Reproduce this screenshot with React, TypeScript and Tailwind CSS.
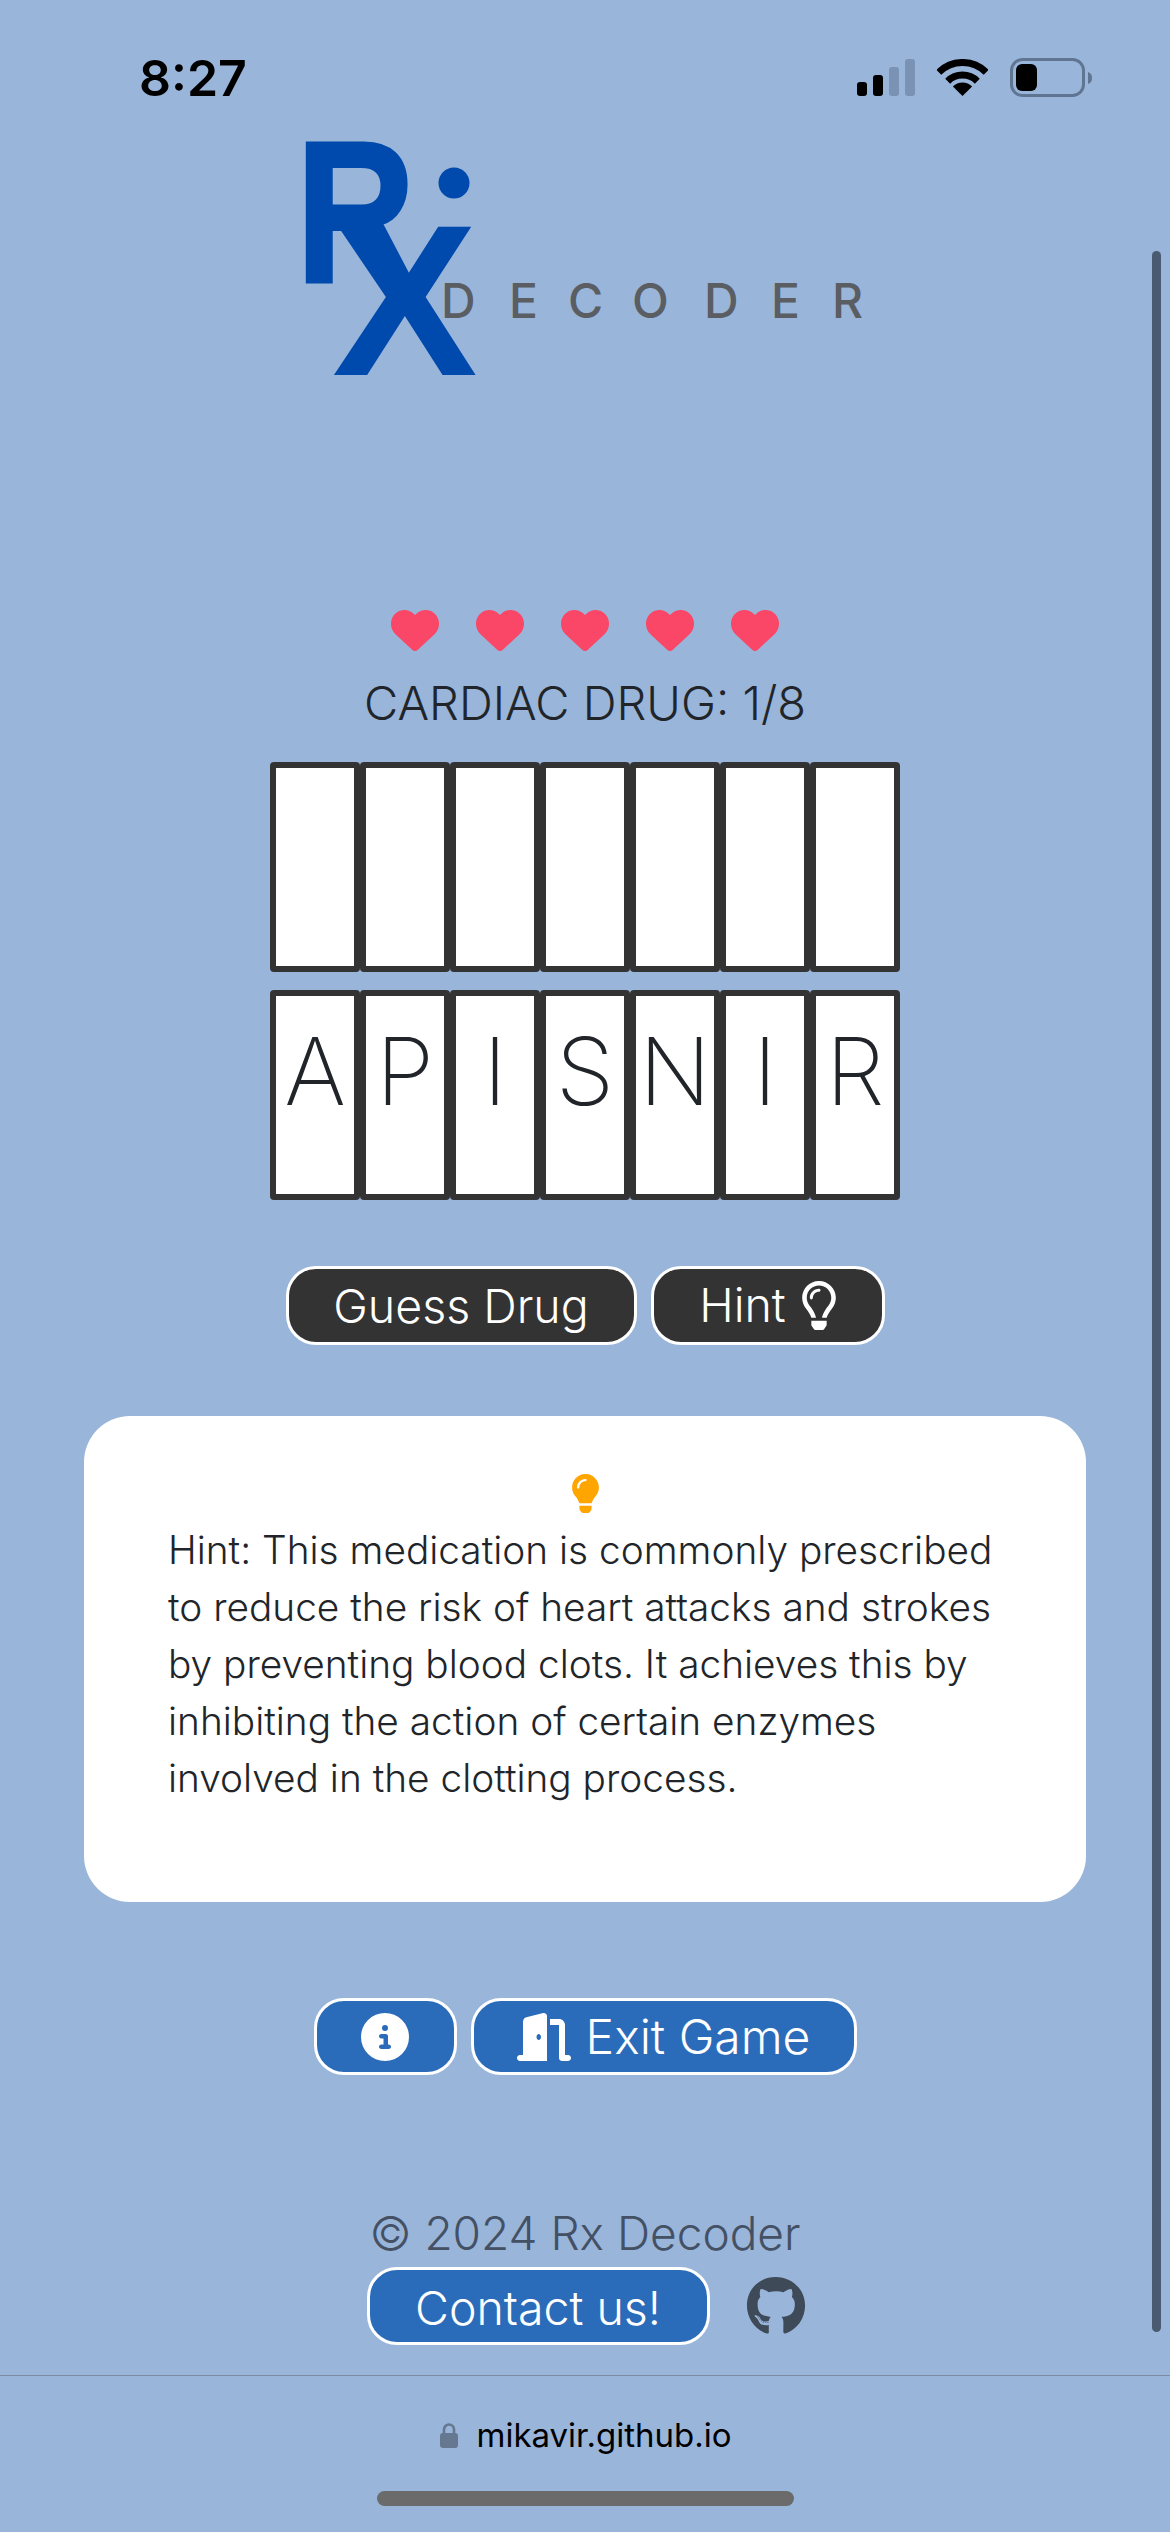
import { FaLightbulb, FaRegLightbulb } from 'react-icons/fa';
import { FaCircleInfo, FaDoorOpen, FaGithub, FaHeart } from 'react-icons/fa6';

const lives = [1, 2, 3, 4, 5];
const letters = ['A', 'P', 'I', 'S', 'N', 'I', 'R'];

function StatusIcons() {
  return (
    <div className="flex items-start">
      <svg width="58" height="37" viewBox="0 0 58 37" className="mt-px">
        <rect x="0" y="23" width="10" height="14" rx="3" fill="#000" />
        <rect x="16" y="16" width="10" height="21" rx="3" fill="#000" />
        <rect x="32" y="8" width="10" height="29" rx="3" fill="#7a93b5" />
        <rect x="48" y="0" width="10" height="37" rx="3" fill="#7a93b5" />
      </svg>
      <svg width="51" height="37" viewBox="0 0 51 37" className="mt-px ml-[22px]">
        <path d="M1.8 13.3A33.5 33.5 0 0 1 49.2 13.3" fill="none" stroke="#000" strokeWidth="7" />
        <path d="M10.7 22.2A21 21 0 0 1 40.3 22.2" fill="none" stroke="#000" strokeWidth="7" />
        <path d="M25.5 37L15.9 27.4A13.5 13.5 0 0 1 35.1 27.4Z" fill="#000" />
      </svg>
      <svg width="82" height="39" viewBox="0 0 82 39" className="ml-[22px]">
        <rect x="1.5" y="1.5" width="72" height="36" rx="11" fill="none" stroke="#5f7592" strokeWidth="3" />
        <rect x="6" y="6" width="21" height="27" rx="6" fill="#000" />
        <path d="M78 14C81 15 82 17 82 20S81 25 78 26Z" fill="#5f7592" />
      </svg>
    </div>
  );
}

function Logo() {
  return (
    <svg width="565" height="234" viewBox="0 0 565 234" className="ml-[305px] shrink-0 overflow-visible">
      <text
        transform="translate(-8.5 140) scale(0.82 1)"
        fontFamily="'Liberation Sans', sans-serif"
        fontWeight="700"
        fontSize="200"
        fill="#004aad"
        stroke="#004aad"
        strokeWidth="4"
      >
        R
      </text>
      <circle cx="149" cy="42" r="15.5" fill="#004aad" />
      <text
        transform="translate(27 234) scale(1.01 1)"
        fontFamily="'Liberation Sans', sans-serif"
        fontWeight="700"
        fontSize="216"
        fill="#004aad"
      >
        X
      </text>
      <text
        x="136 204 263 327 399 466 527"
        y="177"
        fontFamily="Inter, sans-serif"
        fontWeight="500"
        fontSize="48"
        fill="#5a5d62"
      >
        DECODER
      </text>
    </svg>
  );
}

function TileRow({ chars }: { chars: string[] }) {
  return (
    <div className="flex justify-center">
      {chars.map((c, i) => (
        <div
          key={i}
          className="w-[90px] h-[210px] box-border border-[6px] border-[#333333] rounded-[4px] bg-white pt-[28px] text-center text-[94px] leading-none font-[250] text-[#212529]"
        >
          {c}
        </div>
      ))}
    </div>
  );
}

export default function App() {
  return (
    <div className="relative w-[1170px] h-[2532px] overflow-hidden bg-[#99b5da] font-[Inter,sans-serif] flex flex-col">
      <div className="flex justify-between h-[141px] pt-[58px] pl-[139px] pr-[78px] shrink-0">
        <span className="text-[50px] leading-[40px] font-semibold text-black">8:27</span>
        <StatusIcons />
      </div>

      <Logo />

      <div className="flex justify-center gap-[37px] mt-[231px] h-[48px]">
        {lives.map((n) => (
          <FaHeart key={n} size={48} color="#fa4767" />
        ))}
      </div>

      <p className="mt-[19px] text-center text-[47px] leading-[60px] font-light text-[#212529]">
        CARDIAC DRUG: 1/8
      </p>

      <div className="mt-[29px] flex flex-col gap-[18px]">
        <TileRow chars={['', '', '', '', '', '', '']} />
        <TileRow chars={letters} />
      </div>

      <div className="mt-[66px] flex justify-center gap-[14px]">
        <button className="w-[351px] h-[79px] rounded-[30px] border-[3px] border-white bg-[#333333] text-white text-[46.5px] font-light pt-[2px]">
          Guess Drug
        </button>
        <button className="w-[234px] h-[79px] rounded-[30px] border-[3px] border-white bg-[#333333] text-white text-[46.5px] font-light flex items-center justify-center gap-[16px]">
          Hint
          <FaRegLightbulb className="w-[34px] h-[49px]" />
        </button>
      </div>

      <div className="mt-[71px] mx-[84px] h-[486px] rounded-[46px] bg-white flex flex-col items-center pt-[58px] shrink-0">
        <FaLightbulb size={39} color="#ffa500" />
        <p className="mt-[8px] w-[834px] whitespace-nowrap text-[38.8px] leading-[57px] font-light text-[#212529]">
          Hint: This medication is commonly prescribed
          <br />
          to reduce the risk of heart attacks and strokes
          <br />
          by preventing blood clots. It achieves this by
          <br />
          inhibiting the action of certain enzymes
          <br />
          involved in the clotting process.
        </p>
      </div>

      <div className="mt-[96px] flex justify-center gap-[14px]">
        <button className="w-[143px] h-[77px] rounded-[30px] border-[3px] border-white bg-[#2b6cba] text-white flex items-center justify-center">
          <FaCircleInfo size={48} />
        </button>
        <button className="w-[386px] h-[77px] rounded-[30px] border-[3px] border-white bg-[#2b6cba] text-white text-[48px] font-light flex items-center justify-center gap-[15px]">
          <FaDoorOpen size={54} />
          Exit Game
        </button>
      </div>

      <p className="mt-[128px] text-center text-[46px] leading-[60px] font-light text-[#445063]">© 2024 Rx Decoder</p>

      <div className="mt-[4px] flex items-center justify-center gap-[36px] pl-[2px]">
        <button className="w-[343px] h-[78px] rounded-[30px] border-[3px] border-white bg-[#2b6cba] text-white text-[46.5px] font-light pt-[4px]">
          Contact us!
        </button>
        <FaGithub size={60} color="#3f4a58" />
      </div>

      <div className="mt-[30px] border-t border-[#7f8aa5] flex items-center justify-center gap-[18px] pt-[39px] pl-[2px]">
        <svg width="18" height="25" viewBox="0 0 18 25">
          <path d="M4 11V6.5a5 5 0 0 1 10 0V11" fill="none" stroke="#667790" strokeWidth="2.6" />
          <rect x="0" y="10" width="18" height="15" rx="3" fill="#667790" />
        </svg>
        <span className="text-[33px] leading-[40px] text-black">mikavir.github.io</span>
      </div>

      <div className="mt-[36px] mx-auto w-[417px] h-[15px] rounded-full bg-[#6b6b6b]" />

      <div className="absolute left-[1152px] top-[251px] w-[9px] h-[2081px] rounded-full bg-[#4a5a70]" />
    </div>
  );
}
